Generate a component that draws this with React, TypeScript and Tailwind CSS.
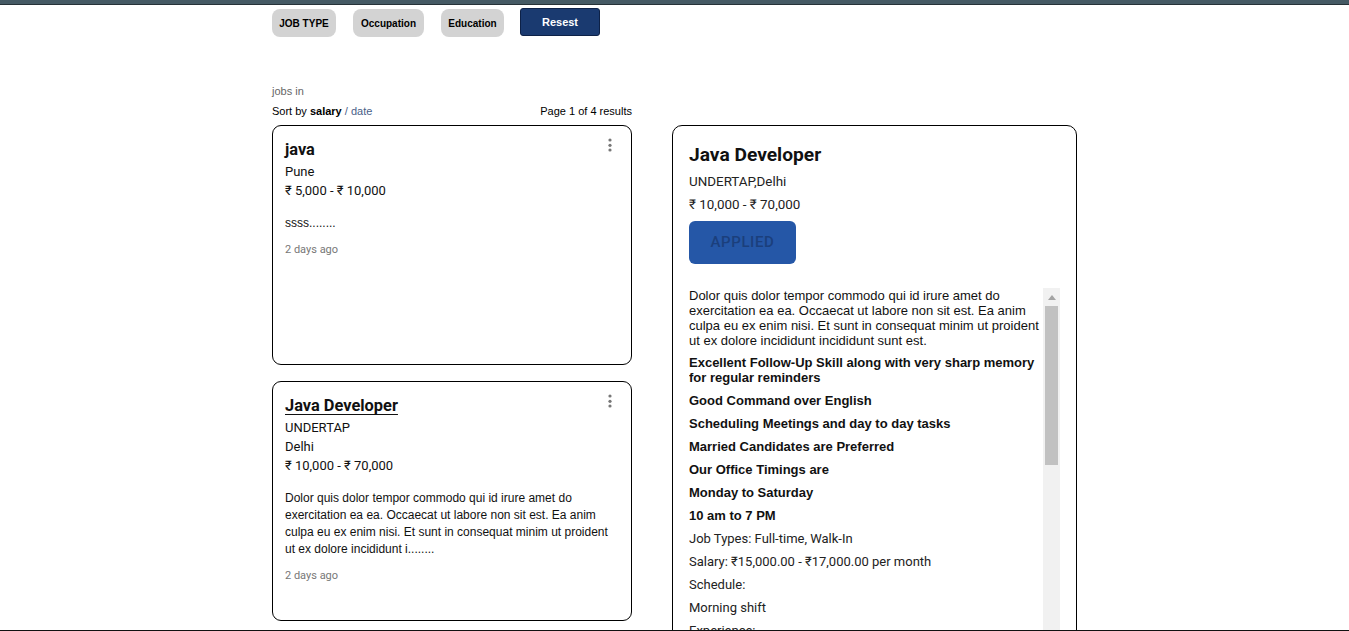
import React from "react";

const Dots = () => (
  <svg width="6" height="16" viewBox="0 0 6 16" className="shrink-0">
    <circle cx="3" cy="3" r="1.6" fill="#777" />
    <circle cx="3" cy="8.3" r="1.6" fill="#777" />
    <circle cx="3" cy="13" r="1.6" fill="#777" />
  </svg>
);

type Job = {
  title: string;
  underline?: boolean;
  lines: string[];
  salary: string;
  desc: string;
};

const jobs: Job[] = [
  { title: "java", lines: ["Pune"], salary: "₹ 5,000 - ₹ 10,000", desc: "ssss........" },
  {
    title: "Java Developer",
    underline: true,
    lines: ["UNDERTAP", "Delhi"],
    salary: "₹ 10,000 - ₹ 70,000",
    desc:
      "Dolor quis dolor tempor commodo qui id irure amet do exercitation ea ea. Occaecat ut labore non sit est. Ea anim culpa eu ex enim nisi. Et sunt in consequat minim ut proident ut ex dolore incididunt i........",
  },
];

function JobCard({ job }: { job: Job }) {
  return (
    <div className="h-[240px] w-[360px] rounded-[9px] border border-black bg-white pl-[12px] pr-[18px] pt-[12px]">
      <div className="flex items-start justify-between">
        <div
          className={
            "text-[16.4px] font-bold leading-[24px] text-[#111] font-['Roboto',sans-serif] " +
            (job.underline ? "underline underline-offset-[3px]" : "")
          }
        >
          {job.title}
        </div>
        <div className="-mt-[1px]">
          <Dots />
        </div>
      </div>
      <div className="font-['Roboto',sans-serif] text-[13px] leading-[19px] text-[#111]">
        {job.lines.map((l) => (
          <div key={l}>{l}</div>
        ))}
        <div>{job.salary}</div>
      </div>
      <p className="mt-[15px] -mr-[8px] font-['Liberation_Sans',Arial,sans-serif] text-[12px] leading-[17px] text-[#111]">
        {job.desc}
      </p>
      <div className="mt-[9px] font-['Roboto',sans-serif] text-[11px] leading-[17px] text-[#777]">
        2 days ago
      </div>
    </div>
  );
}

const boldParas = [
  "Excellent Follow-Up Skill along with very sharp memory for regular reminders",
  "Good Command over English",
  "Scheduling Meetings and day to day tasks",
  "Married Candidates are Preferred",
  "Our Office Timings are",
  "Monday to Saturday",
  "10 am to 7 PM",
];

const plainParas = [
  "Job Types: Full-time, Walk-In",
  "Salary: ₹15,000.00 - ₹17,000.00 per month",
  "Schedule:",
  "Morning shift",
  "Experience:",
  "total work: 1 year (Preferred)",
  "Language:",
  "English (Preferred)",
];

export default function App() {
  return (
    <div className="flex h-[631px] flex-col overflow-hidden bg-white font-['Liberation_Sans',Arial,sans-serif]">
      <div className="h-[4px] shrink-0 bg-[#455a64]" />
      <div className="h-px shrink-0 bg-[#263238]" />
      <div className="min-h-0 flex-1 overflow-hidden">
        <div className="mx-auto w-[805px]">
          <div className="mt-[3px] flex items-start gap-[17px]">
            <button className="mt-px h-[28px] w-[64px] rounded-[8px] bg-[#d3d3d3] text-[10px] font-bold text-black">
              JOB TYPE
            </button>
            <button className="mt-px h-[28px] w-[71px] rounded-[8px] bg-[#d3d3d3] text-[10px] font-bold text-black">
              Occupation
            </button>
            <button className="mt-px h-[28px] w-[63px] rounded-[8px] bg-[#d3d3d3] text-[10px] font-bold text-black">
              Education
            </button>
            <button className="-ml-px h-[28px] w-[80px] rounded-[3px] border border-[#0d2147] bg-[#1a3a70] text-[11px] font-bold text-white">
              Resest
            </button>
          </div>

          <div className="mt-[48px] text-[11px] leading-[13px] text-[#666]">jobs in</div>
          <div className="mt-[7px] flex w-[360px] justify-between text-[11px] leading-[13px] text-black">
            <div>
              Sort by <span className="font-bold">salary</span>{" "}
              <span className="text-[#4a6088]">/ date</span>
            </div>
            <div>Page 1 of 4 results</div>
          </div>

          <div className="mt-[7px] flex items-start gap-[40px]">
            <div className="flex flex-col gap-[16px]">
              {jobs.map((j) => (
                <JobCard key={j.title} job={j} />
              ))}
            </div>

            <div className="h-[560px] w-[405px] rounded-[10px] border border-black px-[16px] pt-[15px]">
              <div className="font-['Roboto',sans-serif] text-[19.2px] font-bold leading-[28px] text-[#111]">
                Java Developer
              </div>
              <div className="mt-[2px] font-['Roboto',sans-serif] text-[13.4px] leading-[22px] text-[#222]">
                UNDERTAP,Delhi
              </div>
              <div className="mt-px font-['Roboto',sans-serif] text-[13.4px] leading-[22px] text-[#222]">
                ₹ 10,000 - ₹ 70,000
              </div>
              <button className="mt-[5px] h-[43px] w-[107px] rounded-[6px] bg-[#2557a7] font-['Roboto',sans-serif] text-[15px] font-medium tracking-[0.6px] text-[#1b3f7c]">
                APPLIED
              </button>
              <div className="mt-[24px] flex h-[400px] w-[371px]">
                <div className="w-[354px] overflow-hidden text-[13px] leading-[15px] text-[#111]">
                  <p className="mb-[7px]">
                    Dolor quis dolor tempor commodo qui id irure amet do exercitation ea ea. Occaecat ut labore non
                    sit est. Ea anim culpa eu ex enim nisi. Et sunt in consequat minim ut proident ut ex dolore
                    incididunt incididunt sunt est.
                  </p>
                  {boldParas.map((p) => (
                    <p key={p} className="mb-[8px] font-bold">
                      {p}
                    </p>
                  ))}
                  {plainParas.map((p) => (
                    <p key={p} className="mb-[8px] font-['Roboto',sans-serif] text-[#222]">
                      {p}
                    </p>
                  ))}
                </div>
                <div className="flex w-[17px] flex-col items-center bg-[#f1f1f1]">
                  <div className="flex h-[18px] items-center justify-center">
                    <svg width="8" height="5" viewBox="0 0 8 5">
                      <polygon points="4,0 8,5 0,5" fill="#a3a3a3" />
                    </svg>
                  </div>
                  <div className="h-[159px] w-[13px] bg-[#c1c1c1]" />
                </div>
              </div>
            </div>
          </div>
        </div>
      </div>
      <div className="h-px shrink-0 bg-[#111]" />
    </div>
  );
}
